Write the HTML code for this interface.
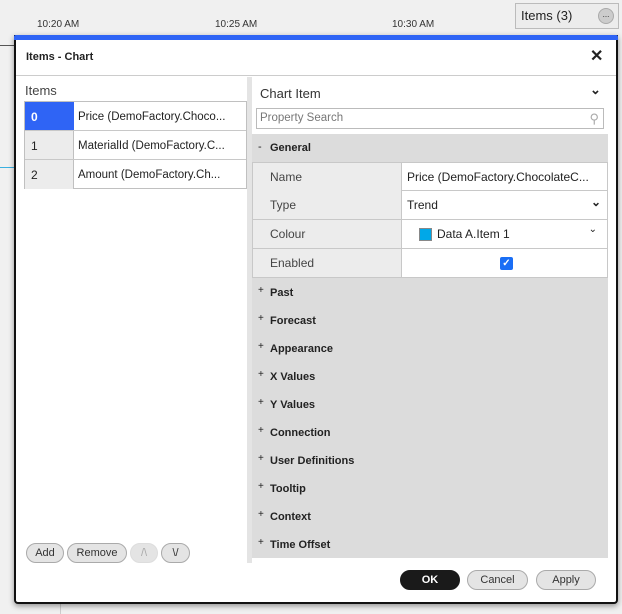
<!DOCTYPE html>
<html><head><style>
*{box-sizing:border-box;margin:0;padding:0}
body{width:622px;height:614px;overflow:hidden;background:#f0f0f0;font-family:"Liberation Sans",sans-serif;font-size:12px;color:#222;position:relative}
.a{position:absolute}
.t{font-size:10px;color:#333;top:19px}
.dlg{left:14px;top:35px;width:604px;height:569px;background:#fff;border:2px solid #111;border-top:none;border-radius:0 0 4px 4px;box-shadow:0 2px 6px rgba(0,0,0,.4)}
.row{position:absolute;left:0;width:100%;border-bottom:1px solid #c8c8c8}
.grp{position:absolute;left:252px;width:356px;height:28px;line-height:28px;font-weight:bold;font-size:11px;padding-left:18px}
.grp .p{position:absolute;left:6px;font-weight:normal;font-size:10px;top:-2px}
.prop{position:absolute;left:252px;width:356px;height:29px;border:1px solid #c8c8c8;border-top:none;background:#fff}
.prop .k{position:absolute;left:0;top:0;width:149px;height:28px;background:#ececec;border-right:1px solid #c8c8c8;padding-left:17px;line-height:28px;color:#444}
.prop .v{position:absolute;left:154px;top:0;line-height:28px}
.btn{position:absolute;height:20px;border:1px solid #aaa;border-radius:10px;background:#e4e4e4;text-align:center;line-height:18px;font-size:11px;color:#333}
.it{position:absolute;left:53px;top:9px;font-size:11.5px}
</style></head><body>
<div class="a t" style="left:37px">10:20 AM</div>
<div class="a t" style="left:215px">10:25 AM</div>
<div class="a t" style="left:392px">10:30 AM</div>
<div class="a" style="left:515px;top:3px;width:104px;height:26px;border:1px solid #bbb;background:#ececec;font-size:13px;line-height:24px;padding-left:5px">Items (3)<span class="a" style="left:82px;top:4px;width:16px;height:16px;border-radius:8px;background:#ccc;border:1px solid #aaa;font-size:8px;line-height:12px;text-align:center">...</span></div>
<div class="a" style="left:0;top:45px;width:14px;height:1px;background:#555"></div>
<div class="a" style="left:0;top:167px;width:14px;height:1px;background:#3ab0e0"></div>
<div class="a" style="left:60px;top:604px;width:470px;height:10px;border-left:1px solid #ccc"></div>
<div class="a dlg">
 <div class="a" style="left:-2px;top:0;width:604px;height:5px;background:#2f64f5;border-radius:2px 2px 0 0"></div>
 <div class="a" style="left:10px;top:16px;font-size:11px;font-weight:bold;color:#222">Items - Chart</div>
 <div class="a" style="left:574px;top:11px;font-size:16px;font-weight:bold">✕</div>
 <div class="a" style="left:0;top:40px;width:100%;height:1px;background:#ccc"></div>
</div>
<div class="a" style="left:25px;top:83px;font-size:13px;color:#444">Items</div>
<div class="a" style="left:24px;top:101px;width:223px;height:88px;border:1px solid #c0c0c0;background:#fff">
 <div class="row" style="top:0;height:29px"><div class="a" style="left:0;top:0;width:49px;height:28px;background:#2f64f5;color:#fff;padding:8px 6px;font-weight:bold">0</div><div class="it">Price (DemoFactory.Choco...</div></div>
 <div class="row" style="top:29px;height:29px"><div class="a" style="left:0;top:0;width:49px;height:28px;background:#ececec;border-right:1px solid #c0c0c0;padding:8px 6px">1</div><div class="it">MaterialId (DemoFactory.C...</div></div>
 <div class="row" style="top:58px;height:29px;border:none"><div class="a" style="left:0;top:0;width:49px;height:29px;background:#ececec;border-right:1px solid #c0c0c0;padding:8px 6px">2</div><div class="it">Amount (DemoFactory.Ch...</div></div>
</div>
<div class="a" style="left:247px;top:77px;width:5px;height:486px;background:#e4e4e4"></div>
<div class="a" style="left:260px;top:86px;font-size:13px;color:#333">Chart Item</div>
<div class="a" style="left:590px;top:82px;font-size:13px;font-weight:bold">⌄</div>
<div class="a" style="left:256px;top:108px;width:348px;height:21px;border:1px solid #bbb;background:#fff;color:#777;font-size:11.5px;line-height:19px;padding-left:3px">Property Search<span class="a" style="right:4px;top:0;color:#aaa;font-size:13px">⚲</span></div>
<div class="a" style="left:252px;top:134px;width:356px;height:424px;background:#dcdcdc"></div>
<div class="grp" style="top:134px"><span class="p" style="top:-1px;font-size:11px">-</span>General</div>
<div class="prop" style="top:162px;border-top:1px solid #c8c8c8"><div class="k">Name</div><div class="v">Price (DemoFactory.ChocolateC...</div></div>
<div class="prop" style="top:191px"><div class="k">Type</div><div class="v">Trend</div><div class="a" style="right:6px;top:4px;font-weight:bold">⌄</div></div>
<div class="prop" style="top:220px"><div class="k">Colour</div><div class="a" style="left:166px;top:8px;width:13px;height:13px;background:#00a8e8;border:1px solid #888"></div><div class="v" style="left:184px">Data A.Item 1</div><div class="a" style="right:10px;top:4px;font-size:10px">⌄</div></div>
<div class="prop" style="top:249px"><div class="k">Enabled</div><div class="a" style="left:247px;top:8px;width:13px;height:13px;background:#1a6ef5;border-radius:2px;color:#fff;font-size:10px;line-height:13px;text-align:center;font-weight:bold">✓</div></div>
<div class="grp" style="top:279px"><span class="p">+</span>Past</div>
<div class="grp" style="top:307px"><span class="p">+</span>Forecast</div>
<div class="grp" style="top:335px"><span class="p">+</span>Appearance</div>
<div class="grp" style="top:363px"><span class="p">+</span>X Values</div>
<div class="grp" style="top:391px"><span class="p">+</span>Y Values</div>
<div class="grp" style="top:419px"><span class="p">+</span>Connection</div>
<div class="grp" style="top:447px"><span class="p">+</span>User Definitions</div>
<div class="grp" style="top:475px"><span class="p">+</span>Tooltip</div>
<div class="grp" style="top:503px"><span class="p">+</span>Context</div>
<div class="grp" style="top:531px"><span class="p">+</span>Time Offset</div>
<div class="btn" style="left:26px;top:543px;width:38px">Add</div>
<div class="btn" style="left:67px;top:543px;width:60px">Remove</div>
<div class="btn" style="left:130px;top:543px;width:28px;color:#aaa;border-color:#ddd">/\</div>
<div class="btn" style="left:161px;top:543px;width:29px">\/</div>
<div class="btn" style="left:400px;top:570px;width:60px;background:#1a1a1a;color:#fff;border-color:#1a1a1a;font-weight:bold">OK</div>
<div class="btn" style="left:467px;top:570px;width:61px">Cancel</div>
<div class="btn" style="left:536px;top:570px;width:60px">Apply</div>
</body></html>
